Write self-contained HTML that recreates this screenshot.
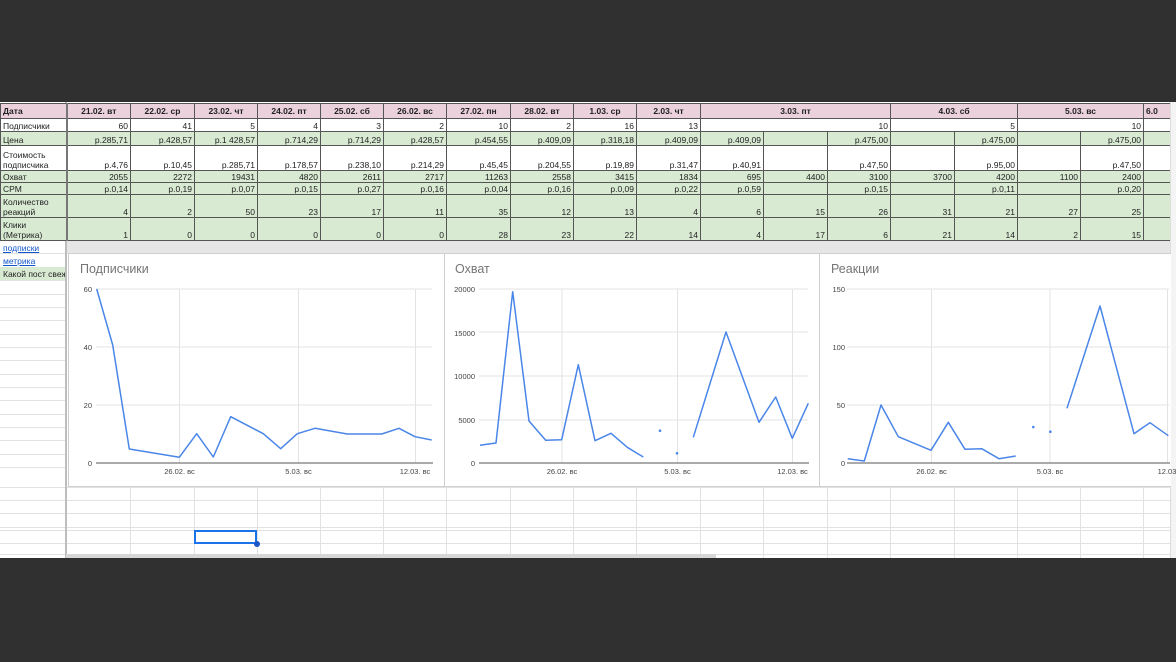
<!DOCTYPE html>
<html><head><meta charset="utf-8"><style>
*{margin:0;padding:0;box-sizing:border-box}
body{width:1176px;height:662px;background:#303030;position:relative;overflow:hidden;font-family:"Liberation Sans",sans-serif;}
#sheet{position:absolute;left:0;top:102px;width:1176px;height:456px;background:#fff;overflow:hidden}
table{position:absolute;left:0;top:1px;width:1176px;border-collapse:collapse;table-layout:fixed;font-size:8.5px;color:#222}
td{border:1px solid #555;padding:0 2px;text-align:right;vertical-align:bottom;white-space:nowrap;overflow:hidden;line-height:10px}
td.l{text-align:left;border-right:2px solid #777}
tr.h td{background:#ead1dc;font-weight:bold;text-align:center;height:15px;vertical-align:middle}
tr.h td.l{text-align:left}
tr.g td{background:#d9ead3}
tr.w td{background:#fff}
tr.d td{border-top:1px dashed #3c78d8;border-bottom:1px dashed #3c78d8}
.hl{position:absolute;left:0;height:1px;background:#e2e2e2}
.vl{position:absolute;width:1px;background:#e2e2e2}
.chart{position:absolute;background:#fff;border:1px solid #cfcfcf}
.t{position:absolute;font-size:12.5px;color:#757575}
svg text{font-family:"Liberation Sans",sans-serif}
</style></head><body>
<div id="sheet">
<div class="hl" style="top:151px;width:1170px"></div>
<div class="hl" style="top:165px;width:66px"></div>
<div class="hl" style="top:178px;width:66px"></div>
<div class="hl" style="top:192px;width:66px"></div>
<div class="hl" style="top:205px;width:66px"></div>
<div class="hl" style="top:218px;width:66px"></div>
<div class="hl" style="top:232px;width:66px"></div>
<div class="hl" style="top:245px;width:66px"></div>
<div class="hl" style="top:258px;width:66px"></div>
<div class="hl" style="top:272px;width:66px"></div>
<div class="hl" style="top:285px;width:66px"></div>
<div class="hl" style="top:298px;width:66px"></div>
<div class="hl" style="top:312px;width:66px"></div>
<div class="hl" style="top:325px;width:66px"></div>
<div class="hl" style="top:338px;width:66px"></div>
<div class="hl" style="top:352px;width:66px"></div>
<div class="hl" style="top:365px;width:66px"></div>
<div class="hl" style="top:385px;width:1170px"></div>
<div class="hl" style="top:398px;width:1170px"></div>
<div class="hl" style="top:411px;width:1170px"></div>
<div class="hl" style="top:425px;width:1170px"></div>
<div class="hl" style="top:428px;width:1170px"></div>
<div class="hl" style="top:441px;width:1170px"></div>
<div class="hl" style="top:452px;width:1170px"></div>
<div class="vl" style="left:130px;top:138px;height:320px"></div>
<div class="vl" style="left:194px;top:138px;height:320px"></div>
<div class="vl" style="left:257px;top:138px;height:320px"></div>
<div class="vl" style="left:320px;top:138px;height:320px"></div>
<div class="vl" style="left:383px;top:138px;height:320px"></div>
<div class="vl" style="left:446px;top:138px;height:320px"></div>
<div class="vl" style="left:510px;top:138px;height:320px"></div>
<div class="vl" style="left:573px;top:138px;height:320px"></div>
<div class="vl" style="left:636px;top:138px;height:320px"></div>
<div class="vl" style="left:700px;top:138px;height:320px"></div>
<div class="vl" style="left:763px;top:138px;height:320px"></div>
<div class="vl" style="left:827px;top:138px;height:320px"></div>
<div class="vl" style="left:890px;top:138px;height:320px"></div>
<div class="vl" style="left:954px;top:138px;height:320px"></div>
<div class="vl" style="left:1017px;top:138px;height:320px"></div>
<div class="vl" style="left:1080px;top:138px;height:320px"></div>
<div class="vl" style="left:1143px;top:138px;height:320px"></div>
<div style="position:absolute;left:66px;top:138px;width:1104px;height:13px;background:#e6e6e6"></div>
<div style="position:absolute;left:65px;top:0;width:2px;height:456px;background:#bdbdbd"></div>
<div style="position:absolute;left:0;top:139px;width:65px;height:13px;font-size:8.5px;color:#1155cc;text-decoration:underline;padding:2px 3px">подписки</div>
<div style="position:absolute;left:0;top:152px;width:65px;height:13px;font-size:8.5px;color:#1155cc;text-decoration:underline;padding:2px 3px">метрика</div>
<div style="position:absolute;left:0;top:165px;width:65px;height:13px;font-size:8.5px;color:#222;background:#d9ead3;padding:2px 3px;white-space:nowrap;overflow:hidden">Какой пост свеж</div>
<div style="position:absolute;left:194px;top:428px;width:63px;height:14px;border:2px solid #1a73e8"></div>
<div style="position:absolute;left:254px;top:439px;width:6px;height:6px;border-radius:3px;background:#1a56c8"></div>
<div style="position:absolute;left:66px;top:452px;width:650px;height:4px;background:#d6d6d6"></div>

<table>
<colgroup><col style="width:66px"><col style="width:64px"><col style="width:64px"><col style="width:63px"><col style="width:63px"><col style="width:63px"><col style="width:63px"><col style="width:64px"><col style="width:63px"><col style="width:63px"><col style="width:64px"><col style="width:63px"><col style="width:64px"><col style="width:63px"><col style="width:64px"><col style="width:63px"><col style="width:63px"><col style="width:63px"><col style="width:63px"><col style="width:33px"></colgroup>
<tr class="h"><td class="l">Дата</td><td>21.02. вт</td><td>22.02. ср</td><td>23.02. чт</td><td>24.02. пт</td><td>25.02. сб</td><td>26.02. вс</td><td>27.02. пн</td><td>28.02. вт</td><td>1.03. ср</td><td>2.03. чт</td><td colspan="3">3.03. пт</td><td colspan="2">4.03. сб</td><td colspan="2">5.03. вс</td><td style="text-align:left">6.0</td></tr>
<tr class="w" style="height:13px"><td class="l">Подписчики</td><td>60</td><td>41</td><td>5</td><td>4</td><td>3</td><td>2</td><td>10</td><td>2</td><td>16</td><td>13</td><td colspan="3">10</td><td colspan="2">5</td><td colspan="2">10</td><td></td></tr>
<tr class="g d" style="height:14px"><td class="l">Цена</td><td>р.285,71</td><td>р.428,57</td><td>р.1 428,57</td><td>р.714,29</td><td>р.714,29</td><td>р.428,57</td><td>р.454,55</td><td>р.409,09</td><td>р.318,18</td><td>р.409,09</td><td>р.409,09</td><td></td><td>р.475,00</td><td></td><td>р.475,00</td><td></td><td>р.475,00</td><td></td></tr>
<tr class="w" style="height:25px"><td class="l" style="line-height:9.5px">Стоимость<br>подписчика</td><td>р.4,76</td><td>р.10,45</td><td>р.285,71</td><td>р.178,57</td><td>р.238,10</td><td>р.214,29</td><td>р.45,45</td><td>р.204,55</td><td>р.19,89</td><td>р.31,47</td><td>р.40,91</td><td></td><td>р.47,50</td><td></td><td>р.95,00</td><td></td><td>р.47,50</td><td></td></tr>
<tr class="g" style="height:12px"><td class="l">Охват</td><td>2055</td><td>2272</td><td>19431</td><td>4820</td><td>2611</td><td>2717</td><td>11263</td><td>2558</td><td>3415</td><td>1834</td><td>695</td><td>4400</td><td>3100</td><td>3700</td><td>4200</td><td>1100</td><td>2400</td><td></td></tr>
<tr class="g" style="height:12px"><td class="l">CPM</td><td>р.0,14</td><td>р.0,19</td><td>р.0,07</td><td>р.0,15</td><td>р.0,27</td><td>р.0,16</td><td>р.0,04</td><td>р.0,16</td><td>р.0,09</td><td>р.0,22</td><td>р.0,59</td><td></td><td>р.0,15</td><td></td><td>р.0,11</td><td></td><td>р.0,20</td><td></td></tr>
<tr class="g" style="height:23px"><td class="l" style="line-height:9.5px">Количество<br>реакций</td><td>4</td><td>2</td><td>50</td><td>23</td><td>17</td><td>11</td><td>35</td><td>12</td><td>13</td><td>4</td><td>6</td><td>15</td><td>26</td><td>31</td><td>21</td><td>27</td><td>25</td><td></td></tr>
<tr class="g" style="height:23px"><td class="l" style="line-height:9.5px">Клики<br>(Метрика)</td><td>1</td><td>0</td><td>0</td><td>0</td><td>0</td><td>0</td><td>28</td><td>23</td><td>22</td><td>14</td><td>4</td><td>17</td><td>6</td><td>21</td><td>14</td><td>2</td><td>15</td><td></td></tr>
</table>
<div style="position:absolute;left:1170px;top:0;width:6px;height:456px;background:#f4f4f4;border-left:1px solid #ddd"></div>
</div>

<div class="chart" style="left:68px;top:253px;width:377px;height:234px"></div>
<div class="chart" style="left:444px;top:253px;width:376px;height:234px"></div>
<div class="chart" style="left:819px;top:253px;width:352px;height:234px;border-right:none"></div>
<div class="t" style="left:80px;top:262px">Подписчики</div>
<div class="t" style="left:455px;top:262px">Охват</div>
<div class="t" style="left:831px;top:262px">Реакции</div>

<svg width="1176" height="662" style="position:absolute;left:0;top:0" font-size="7.5" fill="#444">
<g stroke="#e3e3e3" stroke-width="1">
<line x1="96" y1="289" x2="432" y2="289"/><line x1="96" y1="347" x2="432" y2="347"/><line x1="96" y1="405" x2="432" y2="405"/>
<line x1="179.5" y1="289" x2="179.5" y2="463"/><line x1="298.5" y1="289" x2="298.5" y2="463"/><line x1="415.5" y1="289" x2="415.5" y2="463"/>
<line x1="479" y1="289" x2="808" y2="289"/><line x1="479" y1="332" x2="808" y2="332"/><line x1="479" y1="376" x2="808" y2="376"/><line x1="479" y1="420" x2="808" y2="420"/>
<line x1="562" y1="289" x2="562" y2="463"/><line x1="677.5" y1="289" x2="677.5" y2="463"/><line x1="792.5" y1="289" x2="792.5" y2="463"/>
<line x1="847" y1="289" x2="1169" y2="289"/><line x1="847" y1="347" x2="1169" y2="347"/><line x1="847" y1="405" x2="1169" y2="405"/>
<line x1="931.5" y1="289" x2="931.5" y2="463"/><line x1="1050" y1="289" x2="1050" y2="463"/><line x1="1167.5" y1="289" x2="1167.5" y2="463"/>
</g>
<g stroke="#555" stroke-width="1">
<line x1="96" y1="463" x2="433" y2="463"/><line x1="479" y1="463" x2="809" y2="463"/><line x1="847" y1="463" x2="1170" y2="463"/>
</g>
<g fill="none" stroke="#4a86e8" stroke-width="1.5" stroke-linejoin="round">
<polyline points="96.7,289 112.7,345 129.3,449 179.3,457.3 196.7,433.7 213.3,457 230.7,416.7 263.3,433.7 280.7,448.7 297.3,433.7 315,428.3 347.3,434 381.7,434 399,428.3 415,436.7 431.7,440"/>
<polyline points="480,445.3 496,443 512.7,291.7 529,421 545.7,440.3 561.7,439.7 578.3,364.7 595,440.7 611,433.3 627.3,447.3 643.3,457"/>
<polyline points="693.3,437.3 726,332 759,422.3 775.7,397 792.3,438.3 808.3,403.3"/>
<polyline points="847.7,458.7 864.3,461 881,405 898.3,436.7 931,450.3 948.3,422.3 965,449.3 981.7,448.7 999,458.7 1015.7,456"/>
<polyline points="1067,408.3 1100,306 1134,433.7 1150,422.7 1168.3,435.7"/>
</g>
<g fill="#4a86e8"><circle cx="660" cy="430.7" r="1.3"/><circle cx="677" cy="453.3" r="1.3"/><circle cx="1033.3" cy="427" r="1.3"/><circle cx="1050.3" cy="431.7" r="1.3"/></g>
<g text-anchor="end">
<text x="92" y="292">60</text><text x="92" y="350">40</text><text x="92" y="408">20</text><text x="92" y="466">0</text>
<text x="475" y="292">20000</text><text x="475" y="336">15000</text><text x="475" y="379">10000</text><text x="475" y="423">5000</text><text x="475" y="466">0</text>
<text x="845" y="292">150</text><text x="845" y="350">100</text><text x="845" y="408">50</text><text x="845" y="466">0</text>
</g>
<g text-anchor="middle">
<text x="179.5" y="474">26.02. вс</text><text x="298.5" y="474">5.03. вс</text><text x="415" y="474">12.03. вс</text>
<text x="562" y="474">26.02. вс</text><text x="677.5" y="474">5.03. вс</text><text x="792.5" y="474">12.03. вс</text>
<text x="931.5" y="474">26.02. вс</text><text x="1050" y="474">5.03. вс</text><text x="1167" y="474">12.03</text>
</g>
</svg>
</body></html>
